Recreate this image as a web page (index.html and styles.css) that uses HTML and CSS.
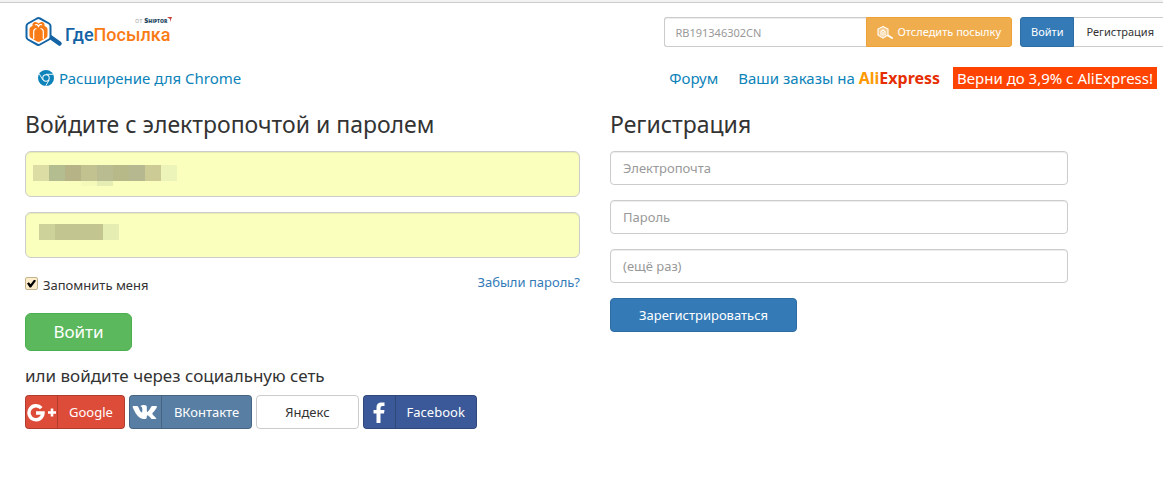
FILE: index.html
```html
<!DOCTYPE html>
<html lang="ru">
<head>
<meta charset="utf-8">
<title>ГдеПосылка — вход</title>
<link rel="stylesheet" href="styles.css">
</head>
<body>
<header class="page-header">
  <div class="topbar">
    <a class="logo" href="#">
      <svg class="logo-mark" viewBox="0 0 38 30" aria-hidden="true">
        <path d="M26 20.500 34.500 26.500" stroke="#1464a5" stroke-width="4.500" stroke-linecap="round"/>
        <path d="M12 1.500Q13.500.700 15 1.500L24 6.500Q25.500 7.400 25.500 9V20Q25.500 21.500 24 22.500L15 27.500Q13.500 28.300 12 27.500L3 22.500Q1.500 21.500 1.500 20V9Q1.500 7.400 3 6.500Z" fill="#fff" stroke="#1464a5" stroke-width="2"/>
        <path d="M4.500 12Q4.500 10.500 6 9.700L7.500 9Q7 6 9.500 5Q12 4.500 13.500 6.500Q15 4.500 17.500 5Q20 6 19.500 9L21 9.700Q22.500 10.500 22.500 12V18.500Q22.500 20 21 21L15 24.500Q13.500 25.300 12 24.500L6 21Q4.500 20 4.500 18.500Z" fill="#f97b16"/>
        <path d="M8.700 22V14.500Q8.700 12 11.500 11.500M18.300 22V14.500Q18.300 12 15.500 11.500M10 8Q12 6.500 13.500 9.500Q15 6.500 17 8" fill="none" stroke="#fff" stroke-width="1.200"/>
      </svg>
      <span class="logo-text">
        <span class="logo-by">от <b>Shiptor</b><svg class="logo-flag" viewBox="0 0 5 5" aria-hidden="true"><path d="M0 0H5L3 5V2Z" fill="#c8423c"/></svg></span>
        <span class="logo-name"><span class="logo-where">Где</span>Посылка</span>
      </span>
    </a>
    <div class="tools">
      <form class="track">
        <input class="track-input" type="text" placeholder="RB191346302CN" aria-label="Номер посылки">
        <button class="track-button" type="button">
          <svg class="track-icon" viewBox="0 0 16 13" aria-hidden="true"><path d="M11 9.500 15 12" stroke="#fff" stroke-width="2" stroke-linecap="round"/><path d="M6 .600 11 3V9L6 12.200 1 9V3Z" fill="#f5c98a" stroke="#fff" stroke-width="1.100"/><path d="M4 9.500V5.500L6 4 8 5.500V9.500M6 6V10.500" fill="none" stroke="#fff" stroke-width="1.100"/></svg>Отследить посылку</button>
      </form>
      <div class="account">
        <a class="account-login" href="#login">Войти</a><a class="account-join" href="#join">Регистрация</a>
      </div>
    </div>
  </div>
  <nav class="nav">
    <a class="nav-chrome" href="#">
      <svg class="chrome-icon" viewBox="0 0 16 16" aria-hidden="true"><circle cx="8" cy="8" r="8" fill="#0c83b9"/><path d="M8 4.300H15M4.800 9.900 1.300 3.900M11.200 9.900 7.700 15.900" stroke="#fff" stroke-width=".9"/><circle cx="8" cy="8" r="3.700" fill="#fff"/><circle cx="8" cy="8" r="2.700" fill="#0c83b9"/></svg>Расширение для Chrome</a>
    <div class="nav-links">
      <a href="#">Форум</a>
      <a href="#">Ваши заказы на <b class="ali">Ali</b><b class="express">Express</b></a>
      <a class="promo" href="#">Верни до 3,9% с AliExpress!</a>
    </div>
  </nav>
</header>
<main class="columns">
  <section class="login" id="login">
    <h1>Войдите с электропочтой и паролем</h1>
    <form class="stack">
      <div class="saved">
        <input class="saved-input" type="email" aria-label="Электропочта">
        <svg class="mosaic" width="150" height="24" viewBox="0 0 150 24" aria-hidden="true" shape-rendering="crispEdges"><path fill="#dcdca5" d="M0 0h16v16H0z"/><path fill="#b4bd8f" d="M16 0h16v16H16z"/><path fill="#b6b487" d="M32 0h16v16H32z"/><path fill="#c1c28f" d="M48 0h16v16H48z"/><path fill="#b9bb91" d="M64 0h16v16H64z"/><path fill="#b7b989" d="M80 0h16v16H80z"/><path fill="#b6b88f" d="M96 0h16v16H96z"/><path fill="#cccb95" d="M112 0h16v16h-16z"/><path fill="#ecf4ba" d="M128 0h16v16h-16z"/><path fill="#f5fabb" d="M48 16h16v5H48z"/><path fill="#e5ecb4" d="M64 16h16v5H64z"/></svg>
      </div>
      <div class="saved">
        <input class="saved-input" type="password" aria-label="Пароль">
        <svg class="mosaic mosaic-short" width="80" height="16" viewBox="0 0 80 16" aria-hidden="true" shape-rendering="crispEdges"><path fill="#cdd19a" d="M0 0h16v16H0z"/><path fill="#c2c590" d="M16 0h48v16H16z"/><path fill="#e5edb2" d="M64 0h16v16H64z"/></svg>
      </div>
      <div class="options">
        <label class="remember"><input class="check" type="checkbox" checked>Запомнить меня</label>
        <a class="forgot" href="#">Забыли пароль?</a>
      </div>
      <button class="submit" type="button">Войти</button>
    </form>
    <h2>или войдите через социальную сеть</h2>
    <div class="social">
      <button class="soc google" type="button"><span class="soc-icon"><svg width="30" height="22" viewBox="0 0 30 22" aria-hidden="true"><path d="M14.300 7.200A7 7 0 1 0 16 12H9" fill="none" stroke="#fff" stroke-width="3.400"/><path d="M25 7.500v8M21 11.500h8" stroke="#fff" stroke-width="2.600"/></svg></span><span class="soc-name">Google</span></button>
      <button class="soc vk" type="button"><span class="soc-icon"><svg width="26" height="16" viewBox="0 0 26 16" aria-hidden="true"><path d="M1 2H5Q6 2 6.300 3Q8 7.500 9.500 8.500Q10.500 8.500 10.300 5Q10.200 2.500 8.500 2.200Q9 1 12 1Q14.800 1 14.800 2.500V7Q15 8.500 16 7.500Q18 5.500 19 3Q19.400 2 20.500 2H24.300Q25.500 2 24.500 4Q23 6.500 20.500 9Q20 10 21 11Q24 13.500 24.500 15H19.500Q16.500 11.300 15.300 11.300Q14.700 11.500 14.700 13.500Q14.700 15 13 15H11Q5.500 14.500 1 4Q.300 2.300 1 2Z" fill="#fff"/></svg></span><span class="soc-name">ВКонтакте</span></button>
      <button class="soc yandex" type="button"><span class="soc-name">Яндекс</span></button>
      <button class="soc facebook" type="button"><span class="soc-icon"><svg width="12" height="21" viewBox="0 0 12 21" aria-hidden="true"><path d="M3.500 21V11.500H.500V8H3.500V5.500Q3.500.500 8.500.500H11.500V4H9.500Q7.500 4 7.500 6V8H11.500L11 11.500H7.500V21Z" fill="#fff"/></svg></span><span class="soc-name">Facebook</span></button>
    </div>
  </section>
  <section class="join" id="join">
    <h1>Регистрация</h1>
    <form class="stack">
      <input class="field" type="email" placeholder="Электропочта" aria-label="Электропочта">
      <input class="field" type="password" placeholder="Пароль" aria-label="Пароль">
      <input class="field" type="password" placeholder="(ещё раз)" aria-label="Пароль ещё раз">
      <button class="join-button" type="button">Зарегистрироваться</button>
    </form>
  </section>
</main>
</body>
</html>
```
FILE: styles.css
```css
* { box-sizing: border-box; }
body {
  margin: 0;
  border-top: 3px solid #ccc;
  background: #fff;
  color: #333;
  font: 13px/20px "Noto Sans", "Open Sans", sans-serif;
  overflow-x: hidden;
}
body::before { content: ""; position: absolute; top: 0; left: 0; right: 0; height: 2px; background: #f3f3f3; }
a { color: #337ab7; text-decoration: none; }
button, input { font: inherit; margin: 0; }
button { cursor: pointer; }
h1, h2 { margin: 0; font-weight: 400; }
h1 { font-size: 23px; line-height: 26px; margin-bottom: 14px; }
h2 { font-size: 17px; line-height: 20px; margin: 15px 0 9px; }

.page-header { padding-left: 25px; }
.topbar { display: flex; justify-content: space-between; align-items: flex-start; height: 44px; padding-top: 14px; }
.logo { display: flex; color: #f97b16; }
.logo-mark { width: 38px; height: 30px; }
.logo-text { display: flex; flex-direction: column; }
.logo-by { align-self: flex-end; color: #aaa; font: 7px/8px "Open Sans", sans-serif; }
.logo-by b { color: #1c4560; font-variant: small-caps; font-weight: 800; }
.logo-flag { width: 5px; height: 5px; vertical-align: top; }
.logo-name { font: 500 18px/20px Roboto, sans-serif; padding: 0 2px; }
.logo-where { color: #1464a5; }

.tools { display: flex; gap: 8px; margin-right: -4px; font-size: 11px; line-height: 18px; }
.track { display: flex; }
.track-input {
  width: 202px; height: 30px; padding: 5px 10px;
  border: 1px solid #ccc; border-right: 0; border-radius: 3px 0 0 3px;
  box-shadow: inset 0 1px 1px rgba(0, 0, 0, .075);
}
::placeholder { color: #999; opacity: 1; }
.track-button {
  display: flex; align-items: center; gap: 4px; padding: 0 10px;
  background: #f0ad4e; color: #fff; border: 1px solid #eea236; border-radius: 0 3px 3px 0;
}
.track-icon { width: 16px; height: 13px; }
.account { display: flex; }
.account a { padding: 5px 12px; border: 1px solid #ccc; color: #333; }
.account .account-login { padding: 5px 10px; background: #337ab7; border-color: #2e6da4; color: #fff; border-radius: 3px 0 0 3px; }
.account .account-join { border-left: 0; border-radius: 0 3px 3px 0; }

.nav { display: flex; justify-content: space-between; margin-top: 20px; padding: 0 6px 0 13px; font-size: 15px; line-height: 22px; }
.nav a { color: #0c83b9; }
.nav-chrome { display: flex; align-items: center; gap: 5px; }
.chrome-icon { width: 16px; height: 16px; }
.nav-links { display: flex; }
.nav-links a { margin-left: 20px; }
.nav-links b { font-size: 16px; }
.nav .ali { color: #f90; }
.nav .express { color: #e62e04; }
.nav-links .promo { margin-left: 13px; padding: 0 4px; background: #ff4300; color: #fff; }

.columns { display: grid; grid-template-columns: repeat(12, 1fr); column-gap: 30px; margin-right: -2px; padding: 22px 0 0 25px; }
.login { grid-column: span 6; }
.join { grid-column: span 5; }
.stack { display: flex; flex-direction: column; align-items: flex-start; gap: 15px; }
.saved { position: relative; width: 100%; }
.saved-input, .field {
  display: block; width: 100%; border: 1px solid #ccc;
  box-shadow: inset 0 1px 1px rgba(0, 0, 0, .075);
}
.saved-input { height: 46px; padding: 10px 16px; border-radius: 6px; background: #faffbd; }
.field { height: 34px; padding: 6px 12px; border-radius: 4px; background: #fff; }
.mosaic { position: absolute; left: 8px; top: 14px; }
.mosaic-short { left: 14px; top: 12px; }
.options { display: flex; justify-content: space-between; align-items: flex-start; width: 100%; height: 25px; }
.remember { display: flex; align-items: center; gap: 5px; line-height: 24px; }
.forgot { line-height: 18px; }
.check {
  appearance: none; width: 13px; height: 13px; margin-bottom: 3px; border: 1px solid #c5b38d; border-radius: 2px;
  background: #feeccb; display: grid; place-items: center;
}
.check:checked::before {
  content: ""; width: 9px; height: 8px; background: #000;
  clip-path: polygon(0 50%, 20% 35%, 40% 60%, 80% 0, 100% 15%, 45% 100%, 30% 100%);
}
.submit {
  min-width: 107px; height: 38px; border: 1px solid #4cae4c; border-radius: 6px;
  background: #5cb85c; color: #fff; font-size: 17px;
}
.join-button {
  height: 34px; padding: 0 28px; border: 1px solid #2e6da4; border-radius: 4px;
  background: #337ab7; color: #fff;
}
.social { display: flex; gap: 4px; }
.soc { display: flex; height: 34px; padding: 0; border: 1px solid rgba(0, 0, 0, .2); border-radius: 4px; color: #fff; }
.soc-icon { display: grid; place-items: center; width: 32px; height: 32px; border-right: 1px solid rgba(0, 0, 0, .2); }
.soc-name { padding: 6px 11px; }
.google { background: #dd4b39; }
.vk { background: #587ea3; }
.vk .soc-name { padding: 6px 12px; }
.yandex { background: #fff; border-color: #ccc; color: #333; }
.yandex .soc-name { padding: 6px 28px; }
.facebook { background: #3b5998; }
```
